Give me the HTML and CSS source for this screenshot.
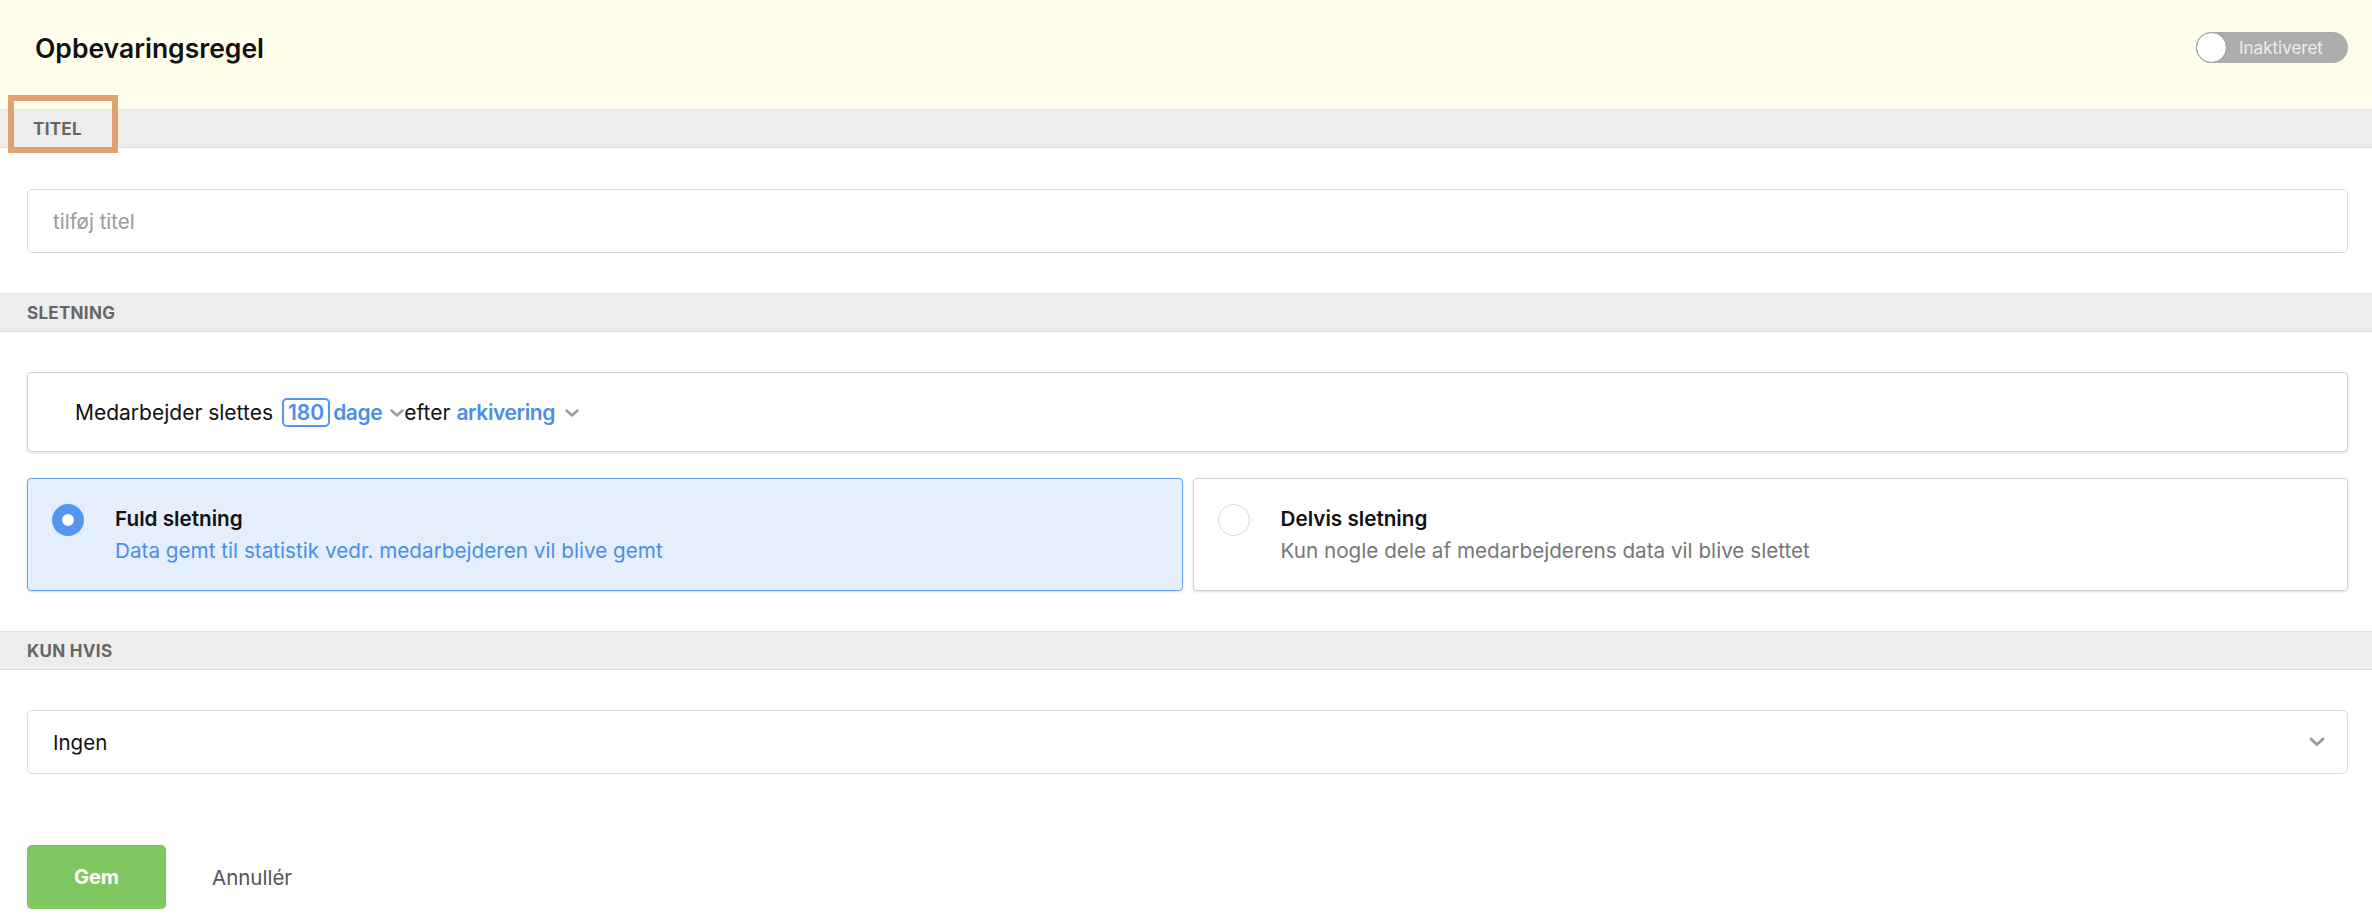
FILE: index.html
```html
<!DOCTYPE html>
<html lang="da">
<head>
    <meta charset="UTF-8">
    <meta name="viewport" content="width=device-width, initial-scale=1.0">
    <title>Opbevaringsregel</title>
    <link rel="stylesheet" href="styles.css">
</head>
<body>
    <div class="rule-page">
        <!-- Header -->
        <header class="rule-header">
            <h1>Opbevaringsregel</h1>
            <div class="toggle">
                <span class="toggle-knob"></span>
                <span class="toggle-label">Inaktiveret</span>
            </div>
        </header>

        <!-- Titel -->
        <section class="section">
            <div class="section-label section-label-focus">
                <span>TITEL</span>
                <span class="focus-ring"></span>
            </div>
            <div class="section-body first">
                <input type="text" class="text-input" placeholder="tilføj titel">
            </div>
        </section>

        <!-- Sletning -->
        <section class="section">
            <div class="section-label"><span>SLETNING</span></div>
            <div class="section-body">
                <div class="sentence-card">
                    <span>Medarbejder slettes</span>
                    <span class="days-box">180</span>
                    <span class="link">dage</span>
                    <svg class="caret" width="14" height="8" viewBox="0 0 14 8"><path d="M1.5 1.5 L7 6.5 L12.5 1.5" fill="none" stroke="#a0a0a0" stroke-width="2.6" stroke-linecap="round" stroke-linejoin="round"/></svg><span class="tight">efter</span>
                    <span class="link link-spaced">arkivering</span>
                    <svg class="caret caret-spaced" width="14" height="8" viewBox="0 0 14 8"><path d="M1.5 1.5 L7 6.5 L12.5 1.5" fill="none" stroke="#a0a0a0" stroke-width="2.6" stroke-linecap="round" stroke-linejoin="round"/></svg>
                </div>

                <div class="option-grid">
                    <div class="option-card selected">
                        <span class="radio radio-on"></span>
                        <div class="option-text">
                            <div class="option-title">Fuld sletning</div>
                            <div class="option-desc">Data gemt til statistik vedr. medarbejderen vil blive gemt</div>
                        </div>
                    </div>
                    <div class="option-card">
                        <span class="radio"></span>
                        <div class="option-text">
                            <div class="option-title">Delvis sletning</div>
                            <div class="option-desc">Kun nogle dele af medarbejderens data vil blive slettet</div>
                        </div>
                    </div>
                </div>
            </div>
        </section>

        <!-- Kun hvis -->
        <section class="section">
            <div class="section-label"><span>KUN HVIS</span></div>
            <div class="section-body">
                <div class="select-box">
                    <span>Ingen</span>
                    <svg width="16" height="10" viewBox="0 0 16 10"><path d="M2 2 L8 7.5 L14 2" fill="none" stroke="#999" stroke-width="2.8" stroke-linecap="round" stroke-linejoin="round"/></svg>
                </div>
            </div>
        </section>

        <div class="actions">
            <button class="save-button">Gem</button>
            <button class="cancel-button">Annullér</button>
        </div>
    </div>
</body>
</html>
```

FILE: styles.css
```css
body {
    margin: 0;
    font-family: Inter, "Liberation Sans", sans-serif;
    background-color: white;
    color: #111;
}

.rule-page {
    width: 100%;
}

/* Header */
.rule-header {
    height: 109px;
    box-sizing: border-box;
    background-color: #fffeeb;
    display: flex;
    align-items: center;
    justify-content: space-between;
    padding: 0 24px 14px 35px;
}

.rule-header h1 {
    margin: 0;
    font-size: 26.5px;
    font-weight: 600;
    color: #111;
}

.toggle {
    width: 152px;
    height: 31px;
    border-radius: 16px;
    background-color: #adadad;
    display: flex;
    align-items: center;
    box-sizing: border-box;
}

.toggle-knob {
    width: 29px;
    height: 29px;
    border-radius: 50%;
    background-color: white;
    border: 1px solid #999;
    flex-shrink: 0;
}

.toggle-label {
    color: #ececec;
    font-size: 17px;
    margin-left: 12px;
}

/* Sections */
.section-label {
    height: 37px;
    background-color: #ededed;
    border-top: 1px solid #e2e2e2;
    border-bottom: 1px solid #dedede;
    padding-left: 27px;
    display: flex;
    align-items: center;
    font-size: 17px;
    font-weight: 700;
    letter-spacing: 0.3px;
    color: #666;
}

.section-label-focus {
    position: relative;
    padding-left: 33px;
}

.focus-ring {
    position: absolute;
    left: 8px;
    top: -15px;
    width: 98px;
    height: 46px;
    border: 6px solid #dea274;
}

.section-body {
    padding: 40px 24px 40px 27px;
}

.section-body.first {
    padding-top: 41px;
}

.text-input {
    display: block;
    width: 100%;
    height: 64px;
    box-sizing: border-box;
    border: 1px solid #dcdcdc;
    border-radius: 5px;
    padding: 0 25px;
    font-family: inherit;
    font-size: 20.5px;
    color: #333;
    outline: none;
}

.text-input::placeholder {
    color: #9a9a9a;
}

/* Sentence */
.sentence-card {
    height: 80px;
    box-sizing: border-box;
    border: 1px solid #cfcfcf;
    border-radius: 4px;
    box-shadow: 0 1px 3px rgba(0, 0, 0, 0.12);
    display: flex;
    align-items: center;
    padding-left: 47px;
    font-size: 21px;
    color: #111;
}

.days-box {
    margin-left: 9px;
    border: 2px solid #5596ee;
    border-radius: 5px;
    color: #4a8fe7;
    font-weight: 600;
    height: 29px;
    box-sizing: border-box;
    padding: 0 4px;
    display: flex;
    align-items: center;
}

.link {
    color: #4a8fe7;
    font-weight: 600;
    letter-spacing: -0.4px;
    margin-left: 3px;
}

.link-spaced {
    margin-left: 6px;
}

.caret {
    margin-left: 8px;
    margin-top: 2px;
}

.tight {
    margin-left: 0;
}

.caret-spaced {
    margin-left: 10px;
}

/* Options */
.option-grid {
    display: grid;
    grid-template-columns: 1fr 1fr;
    gap: 10px;
    margin-top: 26px;
}

.option-card {
    height: 113px;
    box-sizing: border-box;
    border: 1px solid #cfcfcf;
    border-radius: 4px;
    box-shadow: 0 1px 3px rgba(0, 0, 0, 0.12);
    display: flex;
    align-items: flex-start;
    padding: 25px 0 0 24px;
}

.option-card.selected {
    background-color: #e4eefc;
    border-color: #6aa4f0;
}

.radio {
    width: 32px;
    height: 32px;
    box-sizing: border-box;
    border-radius: 50%;
    border: 1px solid #dadada;
    background-color: white;
    flex-shrink: 0;
}

.radio-on {
    border: 10px solid #5597ef;
    background-color: white;
}

.option-text {
    margin-left: 31px;
}

.option-title {
    font-size: 20.7px;
    font-weight: 600;
    color: #111;
    line-height: 28px;
    margin-top: 1px;
}

.option-desc {
    font-size: 20.7px;
    color: #777;
    margin-top: 5px;
}

.selected .option-desc {
    color: #4a8fe7;
}

/* Select */
.select-box {
    height: 64px;
    box-sizing: border-box;
    border: 1px solid #dcdcdc;
    border-radius: 5px;
    display: flex;
    align-items: center;
    justify-content: space-between;
    padding: 0 22px 0 25px;
    font-size: 20.5px;
    color: #111;
}

/* Actions */
.actions {
    display: flex;
    align-items: center;
    padding: 31px 27px 0;
}

button {
    font-family: inherit;
    border: none;
    cursor: pointer;
}

.save-button {
    width: 139px;
    height: 64px;
    background-color: #80c762;
    color: white;
    font-size: 20px;
    font-weight: 700;
    border-radius: 5px;
    box-shadow: 0 1px 3px rgba(0, 0, 0, 0.12);
}

.cancel-button {
    background: none;
    color: #555;
    font-size: 20.5px;
    margin-left: 46px;
    padding: 0;
}
```
